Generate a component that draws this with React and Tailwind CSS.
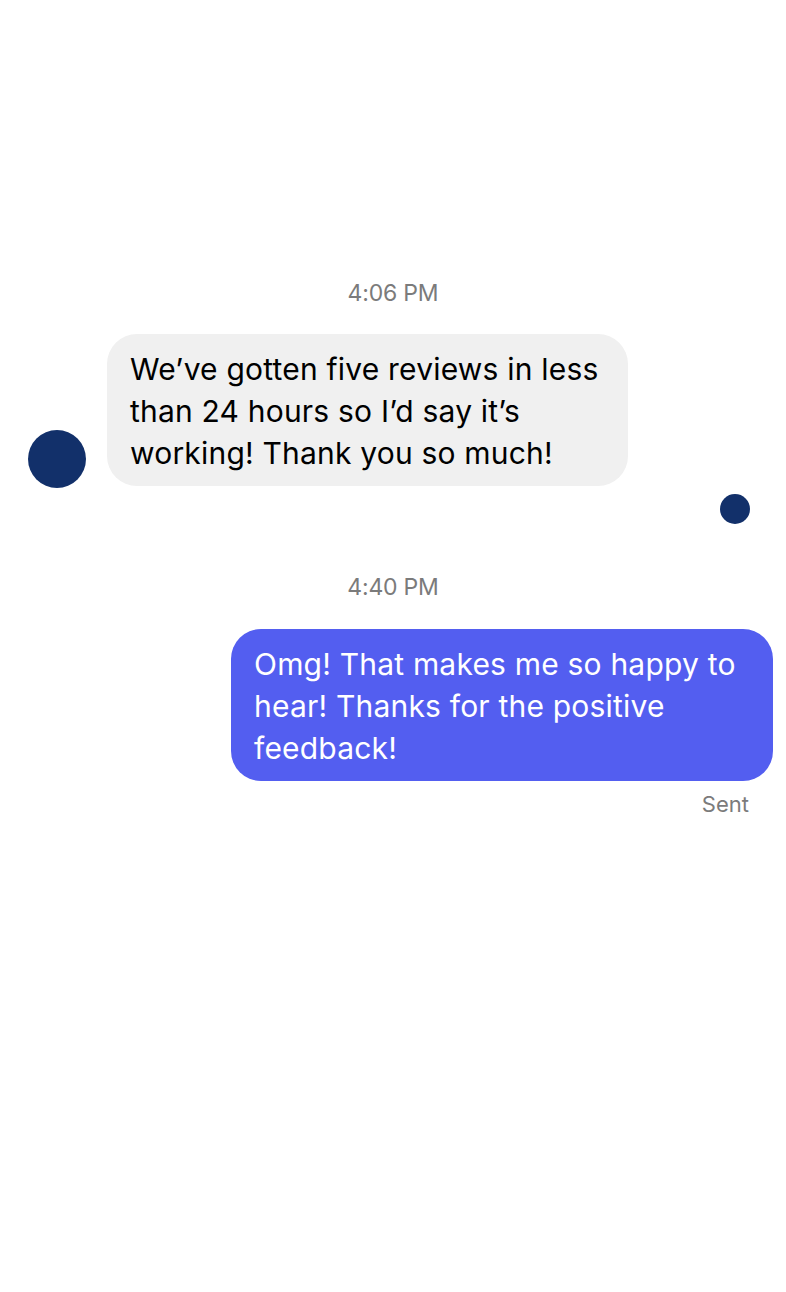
export default function App() {
  const font = { fontFamily: "Inter, 'Noto Sans', sans-serif" };
  return (
    <div className="w-[786px] h-[1292px] bg-white flex flex-col" style={font}>
      <div className="h-[279px]" />
      <p className="text-center text-[23px] leading-[28px] text-[#7b7b7b] tracking-[-0.2px]">4:06 PM</p>

      <div className="mt-[27px] flex items-end pl-[28px] gap-[21px]">
        <div className="w-[58px] h-[58px] rounded-full bg-[#12306a] mb-[-2px]" />
        <div className="w-[521px] bg-[#f0f0f0] rounded-[30px] pl-[23px] pt-[14px] pb-[12px] text-[30px] leading-[42px] text-black tracking-[0.2px] whitespace-nowrap">
          We’ve gotten five reviews in less<br />
          than 24 hours so I’d say it’s<br />
          working! Thank you so much!
        </div>
      </div>

      <div className="flex justify-end pr-[36px] mt-[8px]">
        <div className="w-[30px] h-[30px] rounded-full bg-[#12306a]" />
      </div>

      <p className="mt-[49px] text-center text-[23px] leading-[28px] text-[#7b7b7b] tracking-[-0.2px]">4:40 PM</p>

      <div className="mt-[28px] flex justify-end pr-[13px]">
        <div className="w-[542px] bg-[#535ef0] rounded-[30px] pl-[23px] pt-[14px] pb-[12px] text-[30px] leading-[42px] text-white tracking-[0.2px] whitespace-nowrap">
          Omg! That makes me so happy to<br />
          hear! Thanks for the positive<br />
          feedback!
        </div>
      </div>

      <p className="mt-[9px] pr-[37px] text-right text-[22px] leading-[28px] text-[#7b7b7b]">Sent</p>
    </div>
  );
}
